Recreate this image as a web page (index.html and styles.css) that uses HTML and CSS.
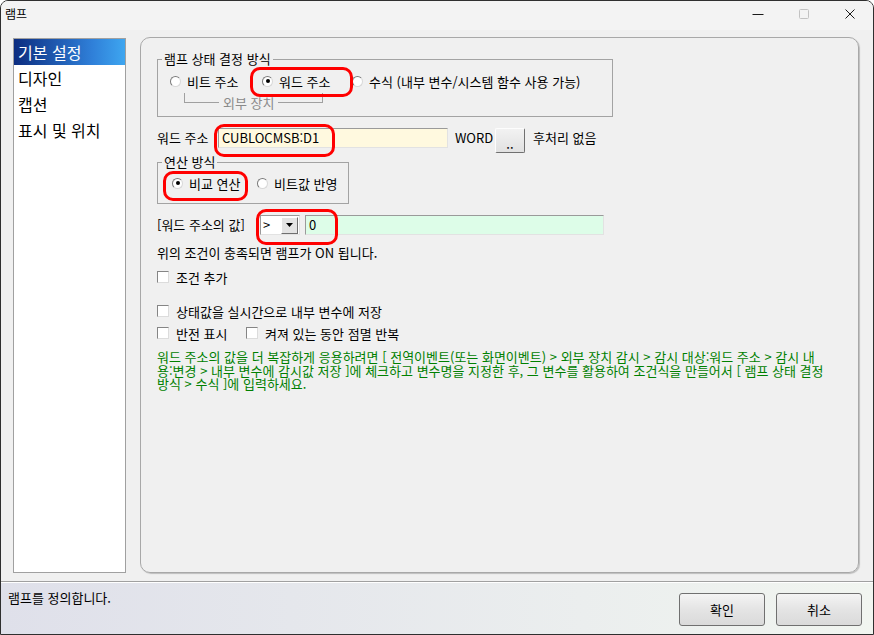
FILE: index.html
```html
<!DOCTYPE html>
<html lang="ko">
<head>
<meta charset="utf-8">
<title>램프</title>
<link rel="stylesheet" href="styles.css">
</head>
<body>
<div class="window">
  <div class="titlebar">
    <div class="title">램프</div>
    <div class="caption-btns">
      <div class="cbtn"><svg width="12" height="12" viewBox="0 0 12 12"><path d="M0.5 6.5h11" stroke="#1a1a1a" stroke-width="1"/></svg></div>
      <div class="cbtn"><svg width="12" height="12" viewBox="0 0 12 12"><rect x="1.5" y="1.5" width="9" height="9" rx="1" fill="none" stroke="#c2c2c2" stroke-width="1"/></svg></div>
      <div class="cbtn"><svg width="12" height="12" viewBox="0 0 12 12"><path d="M1.5 1.5l9 9M10.5 1.5l-9 9" stroke="#1a1a1a" stroke-width="1"/></svg></div>
    </div>
  </div>
  <div class="content">
    <ul class="sidebar">
      <li class="sel">기본 설정</li>
      <li>디자인</li>
      <li>캡션</li>
      <li>표시 및 위치</li>
    </ul>
    <div class="panel">
      <fieldset class="group g1">
        <legend>램프 상태 결정 방식</legend>
        <div class="opts">
          <div class="opt"><span class="radio"></span><span>비트 주소</span></div>
          <div class="opt mark mark-word"><span class="radio on"></span><span>워드 주소</span></div>
          <div class="opt"><span class="radio"></span><span>수식 (내부 변수/시스템 함수 사용 가능)</span></div>
        </div>
        <div class="bracket"><span class="seg l"></span><span class="btext">외부 장치</span><span class="seg r"></span></div>
      </fieldset>

      <div class="row addr">
        <span class="lbl-addr">워드 주소</span>
        <div class="field yellow mark mark-addr">CUBLOCMSB:D1</div>
        <span class="word">WORD</span>
        <div class="dots">..</div>
        <span class="post">후처리 없음</span>
      </div>

      <fieldset class="group g2">
        <legend>연산 방식</legend>
        <div class="opts">
          <div class="opt mark mark-cmp"><span class="radio on"></span><span>비교 연산</span></div>
          <div class="opt"><span class="radio"></span><span>비트값 반영</span></div>
        </div>
      </fieldset>

      <div class="row val">
        <span class="lbl-val">[워드 주소의 값]</span>
        <div class="select mark mark-sel">
          <span class="cur">&gt;</span>
          <span class="drop"><svg width="7" height="4" viewBox="0 0 7 4"><path d="M0 0h7L3.5 4z" fill="#000"/></svg></span>
        </div>
        <div class="field green">0</div>
      </div>

      <div class="line info">위의 조건이 충족되면 램프가 ON 됩니다.</div>

      <div class="cbrow c1"><span class="cb"></span><span>조건 추가</span></div>
      <div class="cbrow c2"><span class="cb"></span><span>상태값을 실시간으로 내부 변수에 저장</span></div>
      <div class="cbrow c3">
        <span class="cbitem"><span class="cb"></span><span>반전 표시</span></span>
        <span class="cbitem"><span class="cb"></span><span>켜져 있는 동안 점멸 반복</span></span>
      </div>

      <p class="note">워드 주소의 값을 더 복잡하게 응용하려면 [ 전역이벤트(또는 화면이벤트) &gt; 외부 장치 감시 &gt; 감시 대상:워드 주소 &gt; 감시 내<br>용:변경 &gt; 내부 변수에 감시값 저장 ]에 체크하고 변수명을 지정한 후, 그 변수를 활용하여 조건식을 만들어서 [ 램프 상태 결정<br>방식 &gt; 수식 ]에 입력하세요.</p>
    </div>
  </div>
  <div class="bottombar">
    <div class="status">램프를 정의합니다.</div>
    <div class="btns">
      <div class="btn">확인</div>
      <div class="btn">취소</div>
    </div>
  </div>
</div>
</body>
</html>
```

FILE: styles.css
```css
* { box-sizing: border-box; }
html, body { margin: 0; padding: 0; }
body {
  width: 874px;
  height: 635px;
  overflow: hidden;
  font-family: "Noto Sans CJK KR", "Noto Sans", sans-serif;
  font-size: 13px;
  color: #000;
  background: #fff;
}
.window {
  width: 874px;
  height: 635px;
  border: 1px solid #2f2f2f;
  border-radius: 8px 8px 0 0;
  background: #f0f0f0;
  display: flex;
  flex-direction: column;
  overflow: hidden;
}
.titlebar {
  height: 29px;
  flex: none;
  display: flex;
  justify-content: space-between;
  background: #f3f3f3;
}
.title { font-size: 12px; line-height: 25px; padding-left: 4px; }
.caption-btns { display: flex; }
.cbtn { width: 46px; height: 25px; display: flex; align-items: center; justify-content: center; }
.cbtn svg { display: block; }

.content {
  height: 551px;
  flex: none;
  display: flex;
  gap: 14px;
  padding: 7px 14px 8px 12px;
}
.sidebar {
  list-style: none;
  margin: 1px 0 0;
  padding: 0;
  width: 113px;
  flex: none;
  background: #fff;
  border: 1px solid #a0a0a0;
}
.sidebar li {
  height: 26px;
  line-height: 26px;
  font-size: 16px;
  padding-left: 4px;
  white-space: nowrap;
}
.sidebar li.sel {
  background: linear-gradient(to right, #0c2d80, #2f7fd8 70%, #3ea6f0);
  color: #fff;
}
.panel {
  flex: 1;
  border: 1px solid #a8a8a8;
  border-radius: 10px;
  box-shadow: 1px 1px 1px #bdbdbd;
  padding: 13px 16px 0;
  display: flex;
  flex-direction: column;
  align-items: flex-start;
}

.group {
  margin: 0;
  padding: 0 0 6px;
  border: 1px solid #a3a3a3;
  min-inline-size: 0;
}
.group legend {
  margin-left: 4px;
  padding: 0 2px;
  height: 16px;
  line-height: 16px;
}
.g1 { width: 456px; }
.g2 { width: 192px; padding-bottom: 10px; }

.opts { display: grid; height: 20px; }
.g1 .opts { margin-top: 4px; padding-left: 12px; grid-template-columns: 92px 90px auto; }
.g2 .opts { margin-top: 3px; padding-left: 14px; grid-template-columns: 85px auto; }
.opt {
  display: flex;
  align-items: center;
  gap: 6px;
  height: 20px;
  white-space: nowrap;
}
.radio {
  width: 11px;
  height: 11px;
  flex: none;
  border-radius: 50%;
  border: 1px solid;
  border-color: #7a7a7a #d8d8d8 #d8d8d8 #7a7a7a;
  background: #fff;
  display: flex;
  align-items: center;
  justify-content: center;
}
.radio.on::before {
  content: "";
  width: 4px;
  height: 4px;
  border-radius: 50%;
  background: #000;
}

.bracket { display: flex; width: 139px; margin: 2px 0 0 26px; }
.seg { height: 10px; border-bottom: 1px solid #a0a0a0; }
.seg.l { width: 35px; border-left: 1px solid #a0a0a0; }
.seg.r { flex: 1; border-right: 1px solid #a0a0a0; }
.btext { margin: 3px 4px 0; line-height: 14px; color: #8a8a8a; white-space: nowrap; }

.row { display: flex; align-items: flex-start; white-space: nowrap; }
.addr { margin-top: 11px; height: 25px; }
.lbl-addr { width: 61px; line-height: 20px; }
.field {
  height: 20px;
  line-height: 18px;
  padding-left: 3px;
  border: 1px solid;
  border-color: #9a9a9a #e2e2e2 #e2e2e2 #9a9a9a;
}
.yellow { width: 230px; background: #fff9df; }
.word { width: 47px; padding-left: 7px; line-height: 20px; }
.dots {
  width: 30px;
  height: 25px;
  border: 1px solid;
  border-color: #fdfdfd #707070 #707070 #fdfdfd;
  border-radius: 2px;
  background: linear-gradient(#f2f2f2, #e1e1e1);
  text-align: center;
  line-height: 30px;
  overflow: hidden;
}
.post { margin-left: 8px; line-height: 20px; }

.g2 { margin-top: 1px; }
.val { margin-top: 11px; height: 20px; }
.lbl-val { width: 103px; line-height: 20px; }
.select {
  width: 40px;
  height: 20px;
  border: 1px solid;
  border-color: #9a9a9a #e2e2e2 #e2e2e2 #9a9a9a;
  background: #fff;
  display: flex;
  justify-content: space-between;
  align-items: center;
  padding-left: 2px;
}
.select .cur { line-height: 18px; }
.drop {
  width: 17px;
  height: 17px;
  margin-right: 1px;
  border: 1px solid;
  border-color: #ffffff #6f6f6f #6f6f6f #ffffff;
  background: #e3e3e3;
  display: flex;
  align-items: center;
  justify-content: center;
}
.drop svg { display: block; }
.green { width: 299px; margin-left: 5px; background: #ddfde8; }

.line { height: 16px; line-height: 16px; white-space: nowrap; }
.info { margin-top: 10px; }
.cbrow { display: flex; align-items: center; height: 16px; white-space: nowrap; }
.cbitem { display: flex; align-items: center; }
.cbitem:first-child { width: 89px; }
.cb {
  width: 12px;
  height: 12px;
  flex: none;
  margin-right: 7px;
  border: 1px solid;
  border-color: #858585 #dcdcdc #dcdcdc #858585;
  background: #fff;
}
.c1 { margin-top: 8px; }
.c2 { margin-top: 18px; }
.c3 { margin-top: 6px; }

.note {
  margin: 9px 0 0;
  color: #008000;
  line-height: 13.5px;
  white-space: nowrap;
}

.mark { position: relative; }
.mark::after {
  content: "";
  position: absolute;
  z-index: 2;
  border: 3px solid #f00;
  border-radius: 10px;
  pointer-events: none;
}
.mark-word::after { left: -12px; top: -4px; width: 97px; height: 24px; }
.mark-addr::after { left: -5px; top: -5px; width: 115px; height: 27px; }
.mark-cmp::after { left: -9px; top: -2px; width: 79px; height: 24px; }
.mark-sel::after { left: -5px; top: -7px; width: 76px; height: 30px; }

.bottombar {
  height: 53px;
  flex: none;
  border-top: 1px solid #a0a0a0;
  box-shadow: inset 0 1px 0 #fff;
  background: linear-gradient(to right, #dfe0ea, #f1f5f0);
  display: flex;
  padding: 0 11px 0 7px;
}
.status { flex: 1; margin-top: 8px; line-height: 16px; }
.btns { display: flex; gap: 11px; margin-top: 11px; }
.btn {
  width: 86px;
  height: 33px;
  border: 1px solid #707070;
  border-radius: 3px;
  background: linear-gradient(#f4f4f4, #e4e4e4 50%, #dadada);
  display: flex;
  align-items: center;
  justify-content: center;
}
```
